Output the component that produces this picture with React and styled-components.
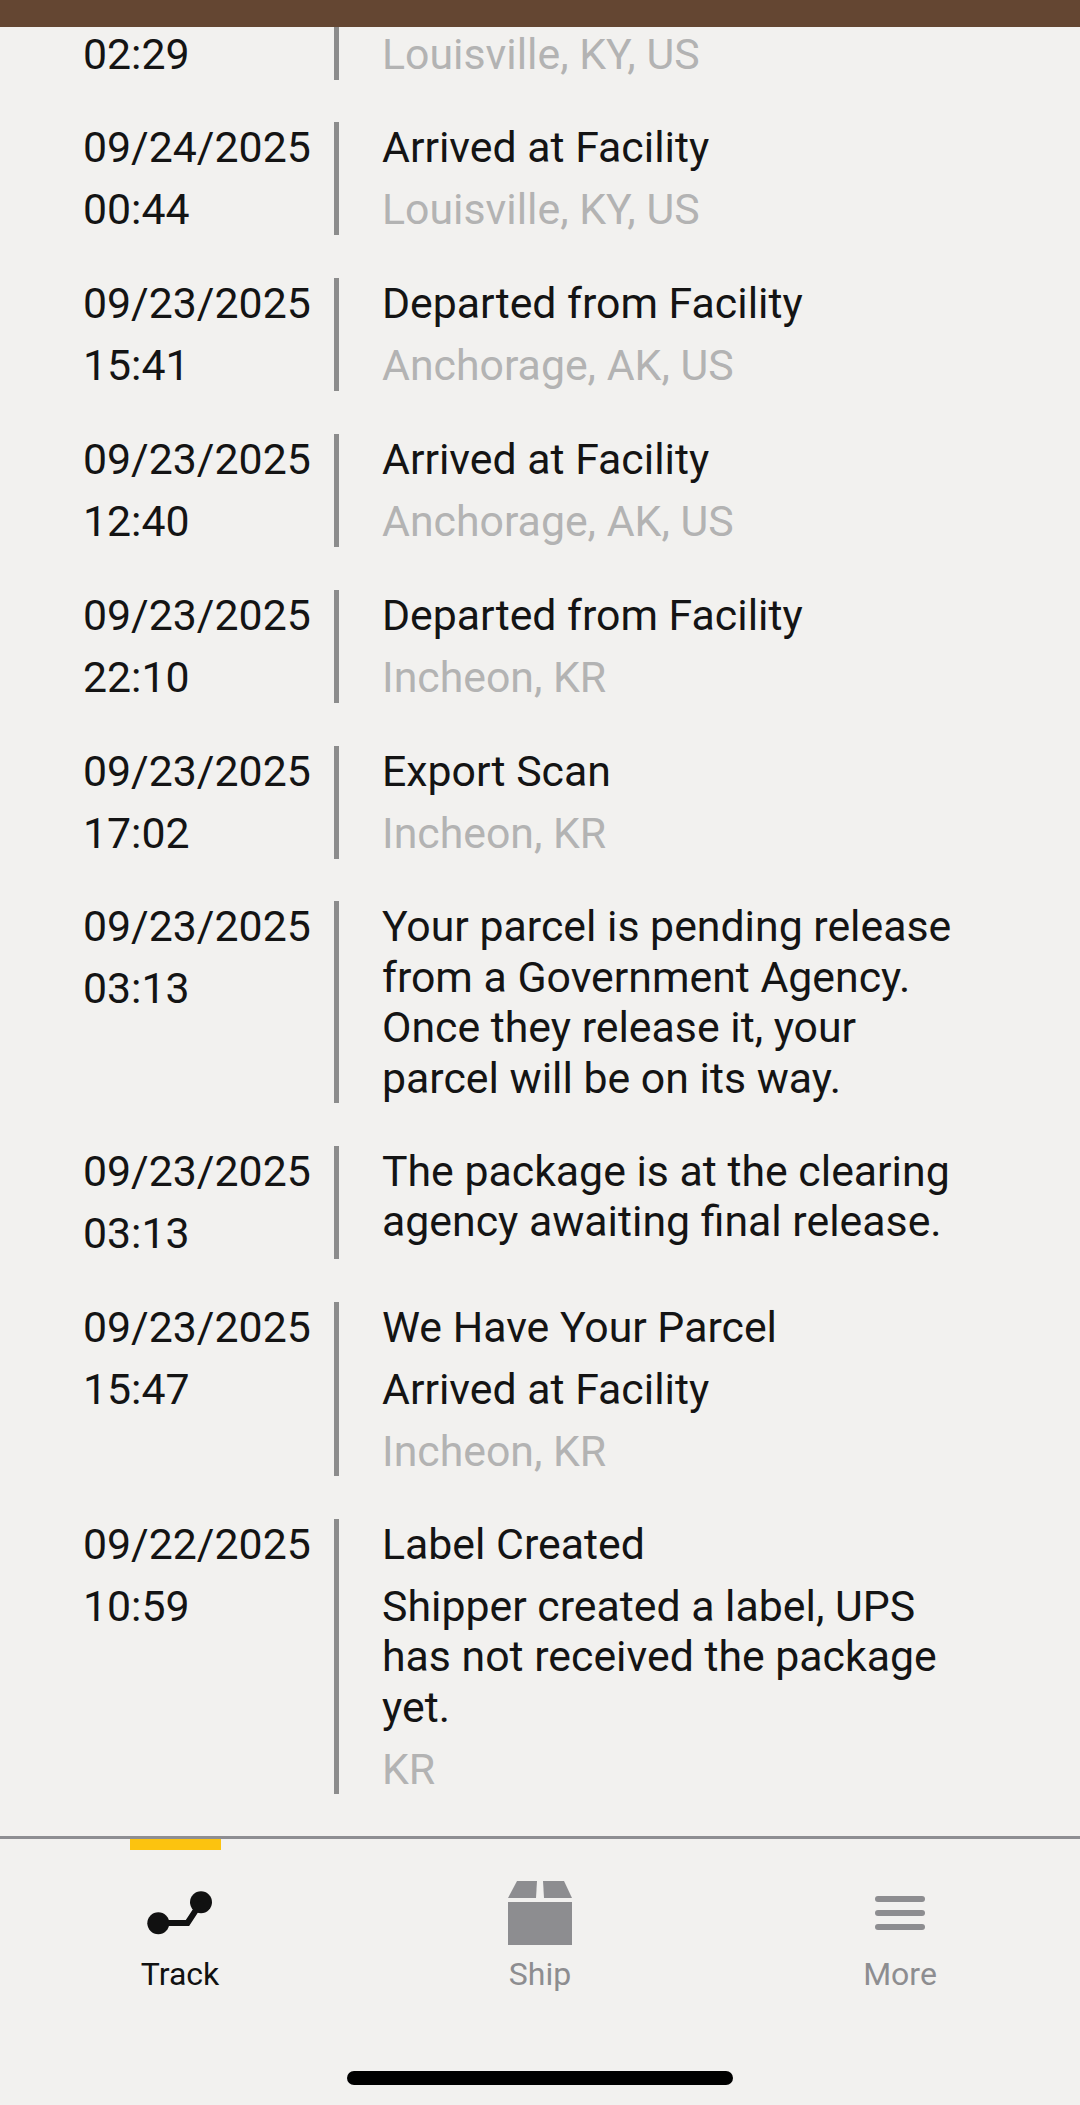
import styled, { createGlobalStyle } from "styled-components";

const GlobalStyle = createGlobalStyle`
  html, body {
    margin: 0;
    padding: 0;
    background: #f2f1ef;
  }
  * {
    box-sizing: border-box;
  }
`;

const Page = styled.div`
  width: 1080px;
  height: 2105px;
  display: flex;
  flex-direction: column;
  overflow: hidden;
  background: #f2f1ef;
  font-family: Roboto, "Liberation Sans", sans-serif;
`;

const TopBar = styled.div`
  height: 27px;
  flex-shrink: 0;
  background: #644632;
`;

const History = styled.div`
  flex: 1;
  min-height: 0;
  display: flex;
  flex-direction: column;
  justify-content: flex-end;
  gap: 42.8px;
  padding-bottom: 42px;
  overflow: hidden;
`;

const Row = styled.div`
  display: flex;
  flex-shrink: 0;
  padding-left: 83px;
`;

const DateCol = styled.div`
  width: 251px;
  flex-shrink: 0;
  display: flex;
  flex-direction: column;
  justify-content: ${(props) => (props.$partial ? "flex-end" : "flex-start")};
  gap: 11.6px;
`;

const Details = styled.div`
  width: 620px;
  min-height: ${(props) => (props.$partial ? "60px" : "113px")};
  display: flex;
  flex-direction: column;
  justify-content: ${(props) => (props.$partial ? "flex-end" : "flex-start")};
  gap: 11.6px;
  padding-left: 43px;
  border-left: 5px solid #8c8c8c;
`;

const Line = styled.div`
  font-size: 42.8px;
  line-height: 50.4px;
  color: ${(props) => (props.$muted ? "#b3b3b3" : "#141414")};
`;

const TabBar = styled.div`
  height: 269px;
  flex-shrink: 0;
  display: flex;
  flex-direction: column;
  border-top: 3px solid #8e8e92;
`;

const Tabs = styled.div`
  display: flex;
  padding-top: 41px;
`;

const Tab = styled.div`
  position: relative;
  flex: 1;
  display: flex;
  flex-direction: column;
  align-items: center;
  color: ${(props) => (props.$active ? "#111111" : "#8d8d90")};
`;

const Indicator = styled.div`
  position: absolute;
  top: -41px;
  left: 130px;
  width: 91px;
  height: 11px;
  background: #fcc30f;
`;

const IconSlot = styled.div`
  height: 65px;
  display: flex;
  align-items: center;
  justify-content: center;
`;

const TabLabel = styled.div`
  margin-top: 9px;
  font-size: 32px;
  line-height: 40px;
`;

const HomeIndicator = styled.div`
  width: 386px;
  height: 14px;
  margin: auto auto 20px;
  border-radius: 7px;
  background: #000000;
`;

const rows = [
  { time: "02:29", lines: [], place: "Louisville, KY, US" },
  { date: "09/24/2025", time: "00:44", lines: ["Arrived at Facility"], place: "Louisville, KY, US" },
  { date: "09/23/2025", time: "15:41", lines: ["Departed from Facility"], place: "Anchorage, AK, US" },
  { date: "09/23/2025", time: "12:40", lines: ["Arrived at Facility"], place: "Anchorage, AK, US" },
  { date: "09/23/2025", time: "22:10", lines: ["Departed from Facility"], place: "Incheon, KR" },
  { date: "09/23/2025", time: "17:02", lines: ["Export Scan"], place: "Incheon, KR" },
  {
    date: "09/23/2025",
    time: "03:13",
    lines: ["Your parcel is pending release from a Government Agency. Once they release it, your parcel will be on its way."],
  },
  {
    date: "09/23/2025",
    time: "03:13",
    lines: ["The package is at the clearing agency awaiting final release."],
  },
  { date: "09/23/2025", time: "15:47", lines: ["We Have Your Parcel", "Arrived at Facility"], place: "Incheon, KR" },
  {
    date: "09/22/2025",
    time: "10:59",
    lines: ["Label Created", "Shipper created a label, UPS has not received the package yet."],
    place: "KR",
  },
];

function TrackIcon() {
  return (
    <svg width="66" height="44" viewBox="0 0 66 44" fill="none">
      <circle cx="11.3" cy="32.3" r="11" fill="currentColor" />
      <circle cx="54" cy="11.3" r="11" fill="currentColor" />
      <path d="M11.3 32H40.5L54 11.3" stroke="currentColor" strokeWidth="6" />
    </svg>
  );
}

function BoxIcon() {
  return (
    <svg width="64" height="64" viewBox="0 0 64 64" fill="currentColor">
      <polygon points="9,0 29,0 28,17 0,17" />
      <polygon points="35,0 56,0 64,17 36,17" />
      <rect x="0" y="21" width="64" height="43" />
    </svg>
  );
}

function MenuIcon() {
  return (
    <svg width="50" height="34" viewBox="0 0 50 34" fill="currentColor">
      <rect x="0" y="0" width="50" height="6" rx="3" />
      <rect x="0" y="14" width="50" height="6" rx="3" />
      <rect x="0" y="28" width="50" height="6" rx="3" />
    </svg>
  );
}

export default function App() {
  return (
    <Page>
      <GlobalStyle />
      <TopBar />
      <History>
        {rows.map((row, i) => (
          <Row key={i}>
            <DateCol $partial={!row.date}>
              {row.date && <Line>{row.date}</Line>}
              <Line>{row.time}</Line>
            </DateCol>
            <Details $partial={!row.date}>
              {row.lines.map((text) => (
                <Line key={text}>{text}</Line>
              ))}
              {row.place && <Line $muted>{row.place}</Line>}
            </Details>
          </Row>
        ))}
      </History>
      <TabBar>
        <Tabs>
          <Tab $active>
            <Indicator />
            <IconSlot>
              <TrackIcon />
            </IconSlot>
            <TabLabel>Track</TabLabel>
          </Tab>
          <Tab>
            <IconSlot>
              <BoxIcon />
            </IconSlot>
            <TabLabel>Ship</TabLabel>
          </Tab>
          <Tab>
            <IconSlot>
              <MenuIcon />
            </IconSlot>
            <TabLabel>More</TabLabel>
          </Tab>
        </Tabs>
        <HomeIndicator />
      </TabBar>
    </Page>
  );
}
